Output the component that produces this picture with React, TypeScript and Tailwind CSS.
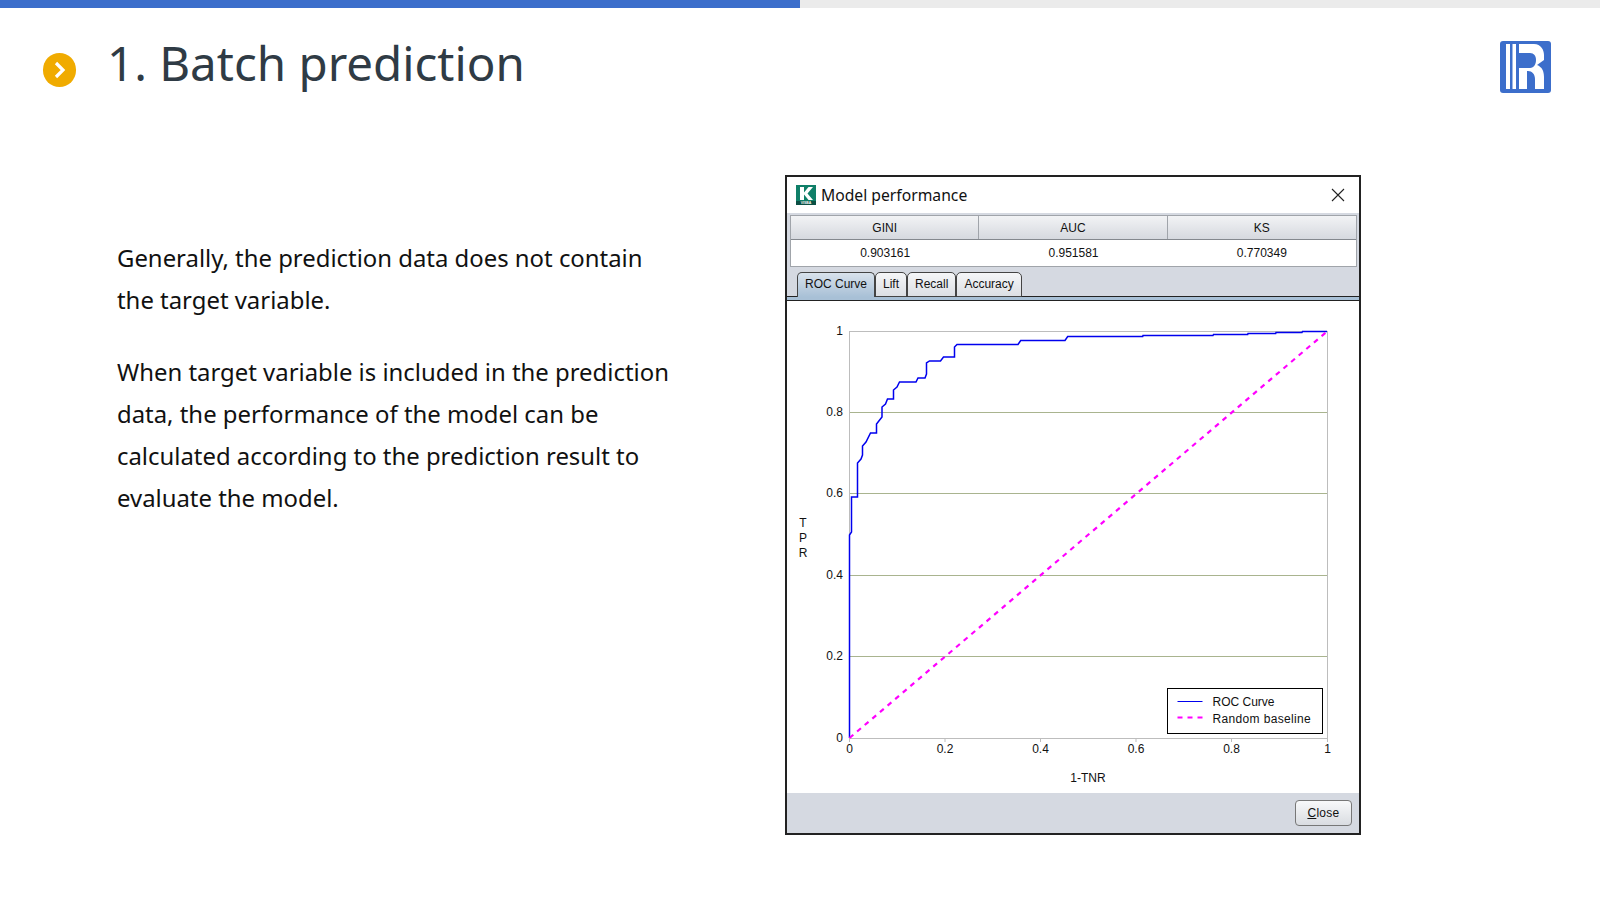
const rocPoints = [
  [849.5, 738], [849.5, 535], [851.5, 532], [851.5, 497], [857.5, 497], [857.5, 463], [861, 459], [862.5, 455],
  [862.5, 446], [866, 442], [870.5, 433], [876.5, 433], [876.5, 424], [882, 417], [882, 407], [885.5, 404],
  [887.5, 399], [893.5, 399], [893.5, 390], [897, 387], [899.5, 382], [916, 382], [918, 378], [925, 378],
  [926.5, 374], [926.5, 363], [929.5, 361], [940.5, 361], [943.5, 357], [954.5, 357], [954.5, 347], [957, 344.5],
  [1018, 344.5], [1020.7, 340.5], [1065, 340.5], [1067.7, 336.5], [1142.7, 336.5], [1143, 335.5], [1213, 335.5],
  [1213.5, 334.5], [1247.7, 334.5], [1248, 333.5], [1275.7, 333.5], [1276, 332.5], [1302, 332.5], [1302.5, 331.5], [1327, 331.5],
];

const pointsAttr = rocPoints.map(([x, y]) => `${x - 787},${y - 300}`).join(" ");

const yTicks = [
  { label: "1", y: 31.5, grid: false },
  { label: "0.8", y: 112.5, grid: true },
  { label: "0.6", y: 193.5, grid: true },
  { label: "0.4", y: 275.5, grid: true },
  { label: "0.2", y: 356.5, grid: true },
  { label: "0", y: 438.5, grid: false },
];

const xTicks = [
  { label: "0", x: 62.5 },
  { label: "0.2", x: 158 },
  { label: "0.4", x: 253.5 },
  { label: "0.6", x: 349 },
  { label: "0.8", x: 444.5 },
  { label: "1", x: 540.5 },
];

function RocChart() {
  return (
    <svg width="571" height="492" viewBox="0 1 571 492" className="block" fontFamily="'Liberation Sans', Arial, sans-serif" fontSize="12" fill="#111">
      <rect x="62.5" y="31.5" width="478" height="407" fill="none" stroke="#bdbdbd" />
      {yTicks.map((t) => (
        <g key={t.label}>
          {t.grid ? <line x1="63" x2="540" y1={t.y} y2={t.y} stroke="#a9b48f" /> : null}
          <text x="56" y={t.y + 3} textAnchor="end">{t.label}</text>
        </g>
      ))}
      {xTicks.map((t) => (
        <g key={t.label}>
          <line x1={t.x} x2={t.x} y1="438" y2="442" stroke="#bdbdbd" />
          <text x={t.x} y="453" textAnchor="middle">{t.label}</text>
        </g>
      ))}
      <polyline points={pointsAttr} fill="none" stroke="#0000ee" strokeWidth="1.5" />
      <line x1="62.5" y1="438" x2="540.5" y2="31" stroke="#ff00ff" strokeWidth="2.2" strokeDasharray="5 5" />
      <text x="16" y="227" textAnchor="middle">T</text>
      <text x="16" y="242" textAnchor="middle">P</text>
      <text x="16" y="257" textAnchor="middle">R</text>
      <text x="301" y="482" textAnchor="middle">1-TNR</text>
      <rect x="380.5" y="388.5" width="155" height="45" fill="#fff" stroke="#000" />
      <line x1="390.5" x2="415.5" y1="401.5" y2="401.5" stroke="#0000ee" />
      <line x1="390.5" x2="415.5" y1="417.5" y2="417.5" stroke="#ff00ff" strokeWidth="2.2" strokeDasharray="5 5" />
      <text x="425.5" y="406">ROC Curve</text>
      <text x="425.5" y="423" letterSpacing="0.35">Random baseline</text>
    </svg>
  );
}

function AppIcon() {
  return (
    <svg width="20" height="20" viewBox="0 0 20 20" className="block">
      <rect width="20" height="20" fill="#0f7f68" />
      <rect y="16" width="20" height="4" fill="#0b4f44" />
      <path d="M4 2h4v5.500L12.500 2H17l-5.500 6.500L17 15h-4.500L8 9.500V15H4z" fill="#fff" />
      <text x="10" y="19.300" textAnchor="middle" fontSize="3.500" fontWeight="700" fill="#fff">VISBA</text>
    </svg>
  );
}

function ModelWindow() {
  const metrics = [
    { name: "GINI", value: "0.903161" },
    { name: "AUC", value: "0.951581" },
    { name: "KS", value: "0.770349" },
  ];
  const tabs = ["ROC Curve", "Lift", "Recall", "Accuracy"];

  return (
    <div className="w-[576px] border-2 border-[#222] bg-white font-['Liberation_Sans',Arial,sans-serif] text-[12px] text-[#111]">
      <div className="flex h-[36px] items-center bg-white pl-[9px] pr-[14px]">
        <AppIcon />
        <span className="ml-[5px] pt-[2px] font-['Noto_Sans',sans-serif] text-[15.7px] text-[#111]">Model performance</span>
        <svg width="14" height="14" viewBox="0 0 14 14" className="ml-auto" stroke="#222" strokeWidth="1.1">
          <path d="M1 1l12 12M13 1L1 13" />
        </svg>
      </div>
      <div className="bg-[#d5d9e1] pl-[3px] pr-[2px] pt-[2px]">
        <div className="border border-[#a0a4aa] bg-white">
          <div className="grid h-6 grid-cols-3 border-b border-[#84888e] bg-gradient-to-b from-[#f2f3f5] to-[#d6d9df]">
            {metrics.map((m, i) => (
              <div key={m.name} className={`flex items-center justify-center ${i < 2 ? "border-r border-[#a0a4aa]" : ""}`}>{m.name}</div>
            ))}
          </div>
          <div className="grid h-[26px] grid-cols-3">
            {metrics.map((m) => (
              <div key={m.name} className="flex items-center justify-center">{m.value}</div>
            ))}
          </div>
        </div>
      </div>
      <div className="flex h-[30px] items-end border-b border-[#222] bg-[#d5d9e1] pl-[10px]">
        {tabs.map((t, i) => (
          <div
            key={t}
            className={`-mb-px flex h-[25px] items-center rounded-t-[5px] border border-[#444] px-[7px] pb-[2px] ${
              i === 0 ? "border-b-0 bg-gradient-to-b from-[#d9e2ec] to-[#a8c0d6]" : "bg-gradient-to-b from-[#f5f6f8] to-[#dcdfe4]"
            }`}
          >
            {t}
          </div>
        ))}
      </div>
      <div className="h-[4px] border-b border-[#222] bg-[#a8c0d6]" />
      <RocChart />
      <div className="flex h-10 items-start justify-end bg-[#d5d9e1] pr-[7px] pt-[7px]">
        <button type="button" className="h-[26px] w-[57px] rounded-[4px] border border-[#777] bg-gradient-to-b from-[#f8f9fa] to-[#d9dce1] text-[12px] tracking-[0.3px]">
          <span className="underline">C</span>lose
        </button>
      </div>
    </div>
  );
}

export default function App() {
  return (
    <div className="flex h-[900px] w-[1600px] flex-col overflow-hidden bg-white font-['Noto_Sans',sans-serif]">
      <div className="h-2 bg-[#ebebeb]">
        <div className="h-2 w-[800px] bg-[#3c6ecb]" />
      </div>
      <header className="flex h-[112px] items-start pl-[43px] pr-[49px]">
        <span className="mt-[45px] flex h-[34px] w-[33px] items-center justify-center rounded-full bg-[#f0ab00]">
          <svg width="14" height="20" viewBox="0 0 14 20" fill="none" stroke="#fff" strokeWidth="3.2">
            <path d="M3 3l7 7-7 7" />
          </svg>
        </span>
        <h1 className="ml-[31px] mt-[22px] text-[47.5px] leading-[66px] text-[#2f3b45]">1. Batch prediction</h1>
        <svg width="51" height="52" viewBox="0 0 51 52" className="ml-auto mt-[33px]">
          <rect width="51" height="52" rx="3" fill="#3c6ecb" />
          <path d="M6 3h4v45H6zM12.500 3h3.500v45h-3.500z" fill="#fff" />
          <path fill="#fff" d="M19 3H34C41 3 44 9 44 14V19L37 24C42 26 44 30 44 36V48H35V38C35 33 32 30 28 30H27V48H19V27H30C34 27 36 23 36 19C36 15 34 12 30 12H19Z" />
        </svg>
      </header>
      <main className="flex pl-[117px]">
        <div className="mt-[117px] w-[570px] text-[23.9px] leading-[42px] text-[#111]">
          <p>Generally, the prediction data does not contain<br />the target variable.</p>
          <p className="mt-[30px]">When target variable is included in the prediction<br />data, the performance of the model can be<br />calculated according to the prediction result to<br />evaluate the model.</p>
        </div>
        <div className="ml-[98px] mt-[55px]">
          <ModelWindow />
        </div>
      </main>
    </div>
  );
}
